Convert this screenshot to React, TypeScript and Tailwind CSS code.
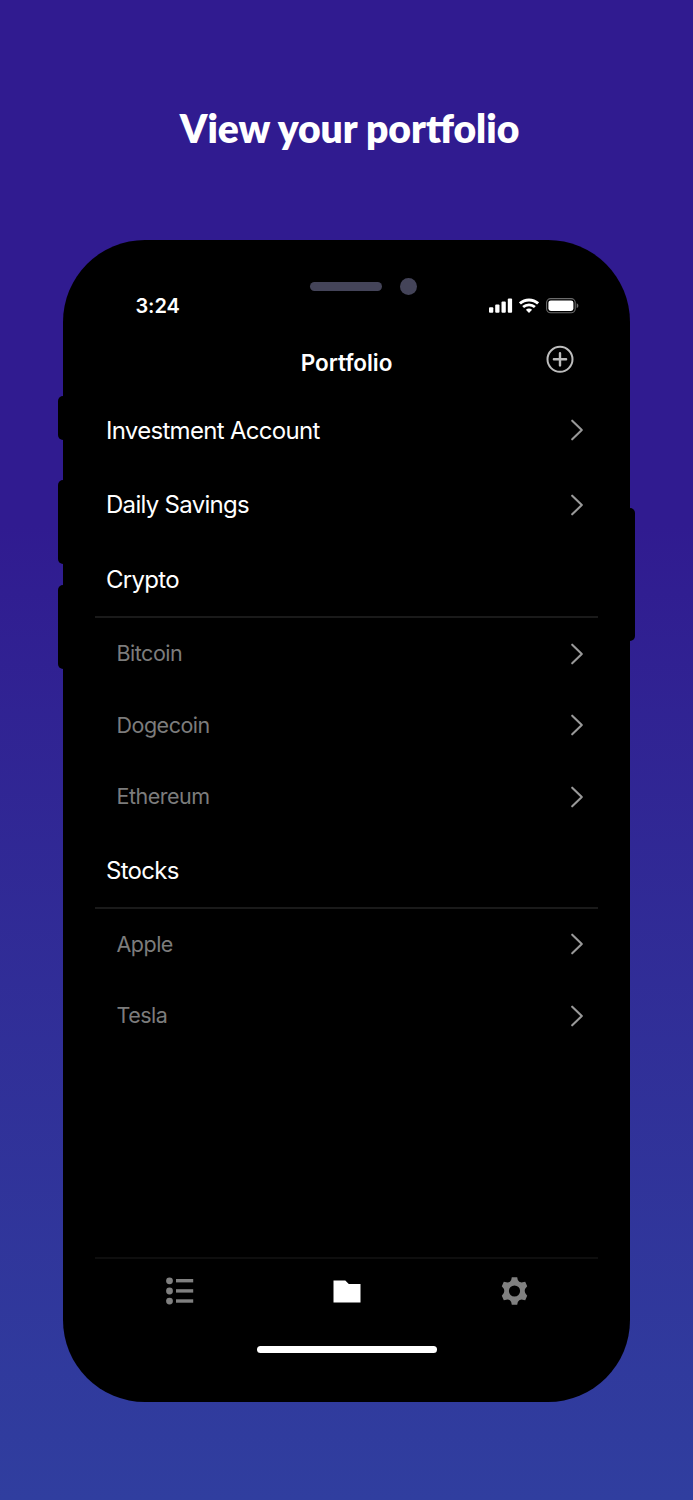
const accounts = ['Investment Account', 'Daily Savings']
const crypto = ['Bitcoin', 'Dogecoin', 'Ethereum']
const stocks = ['Apple', 'Tesla']

function Chevron() {
  return (
    <svg width="14" height="22" viewBox="0 0 14 22" fill="none" stroke="#999999" strokeWidth="2.1" strokeLinecap="round" strokeLinejoin="round">
      <path d="M2.2 1.7 11.8 11 2.2 20.3" />
    </svg>
  )
}

function StatusBar() {
  return (
    <div className="flex h-[30px] items-center justify-between pl-[40.5px] pr-[19px]">
      <span className="text-[20px] leading-[30px] font-semibold -tracking-[0.1px]">3:24</span>
      <div className="flex items-center">
        <svg width="24" height="16" viewBox="0 0 24 16" fill="#fff">
          <rect x="0" y="9.3" width="4.3" height="5.4" rx="1" />
          <rect x="6.2" y="6.6" width="4.3" height="8.1" rx="1" />
          <rect x="12.5" y="3.4" width="4.3" height="11.3" rx="1" />
          <rect x="18.8" y="0.4" width="4.3" height="14.3" rx="1" />
        </svg>
        <svg className="ml-[6px]" width="20" height="16" viewBox="0 0 20 16" fill="none" stroke="#fff" strokeWidth="3">
          <path d="M0.9 5.4C6 0.7 14 0.7 19.1 5.4" />
          <path d="M4.1 9.1C7.4 6 12.6 6 15.9 9.1" strokeWidth="2.7" />
          <path d="M6.9 11.8C8.7 10.2 11.3 10.2 13.1 11.8L10 14.9Z" fill="#fff" stroke="none" />
        </svg>
        <svg className="ml-[7px]" width="33" height="16" viewBox="0 0 33 16">
          <rect x="0.6" y="0.6" width="28.6" height="14.2" rx="4" fill="none" stroke="#6b6b6b" strokeWidth="1.1" />
          <rect x="2.4" y="2.4" width="25" height="10.6" rx="2.4" fill="#fff" />
          <path d="M30.7 5.3c2.2.8 2.2 4 0 4.8z" fill="#6b6b6b" />
        </svg>
      </div>
    </div>
  )
}

function SectionTitle({ name }: { name: string }) {
  return (
    <div className="flex h-[76px] items-center border-b-2 border-[#1a1a1a] pt-[2px] pl-[11px] text-[24px] tracking-[-0.7px]">
      {name}
    </div>
  )
}

function Asset({ name }: { name: string }) {
  return (
    <li className="flex h-[71.5px] items-center justify-between pr-[14px] pl-[21.5px] text-[21.5px] tracking-[-0.5px] text-[#7c7c7c]">
      <span className="pb-px">{name}</span>
      <Chevron />
    </li>
  )
}

function TabBar() {
  return (
    <nav className="grid h-[66px] grid-cols-3 justify-items-center border-t-2 border-[#0e0e0e] pt-[18px]">
      <svg className="ml-[3px]" width="28" height="28" viewBox="0 0 28 28" fill="#808080">
        <circle cx="3.5" cy="3.8" r="3.4" />
        <circle cx="3.5" cy="14" r="3.4" />
        <circle cx="3.5" cy="24.1" r="3.4" />
        <rect x="10" y="2" width="17.2" height="3.4" />
        <rect x="10" y="12.2" width="17.2" height="3.4" />
        <rect x="10" y="22.3" width="17.2" height="3.4" />
      </svg>
      <svg className="ml-px" width="28" height="28" viewBox="0 0 28 28" fill="#fff">
        <path d="M.5 3.5h11.8l3.5 3.4h11.7v18.7H.5z" />
      </svg>
      <svg width="28" height="28" viewBox="0 0 28 28" fill="#808080" fillRule="evenodd">
        <path d="M11.8.3h5.4l.6 2.7Q18.8 5.4 21.5 5.5l3.7-.7 2 4.4Q24.7 11.500 24.700 14q0 2.500 2.500 4.800l-2 4.400-3.700-.7Q18.800 22.600 17.800 25l-.6 2.700h-5.400l-.6-2.700Q10.200 22.600 7.500 22.500l-3.700.7-2-4.400Q4.300 16.500 4.300 14q0-2.500-2.500-4.800l2-4.400 3.700.7Q10.200 5.400 11.200 3zM14.500 8.400a5.600 5.600 0 1 0 0 11.200 5.600 5.600 0 1 0 0-11.200z" />
      </svg>
    </nav>
  )
}

export default function App() {
  return (
    <main className="flex h-[1500px] w-[693px] flex-col items-center bg-linear-to-b from-[#301b90] from-35% to-[#303e9f] font-['Inter',sans-serif] text-white">
      <h1 className="ml-[6px] h-[240px] pt-[102px] font-['Lato',sans-serif] text-[39px] leading-[52px] font-extrabold whitespace-nowrap">
        View your portfolio
      </h1>

      <div className="relative flex h-[1162px] w-[567px] shrink-0 flex-col rounded-[82px] bg-black px-8">
        {/* side buttons */}
        <span className="absolute top-[156.4px] -left-[5px] h-[44px] w-3 rounded-[5px] bg-black" />
        <span className="absolute top-[240.4px] -left-[5px] h-[84px] w-3 rounded-[5px] bg-black" />
        <span className="absolute top-[345.4px] -left-[5px] h-[84px] w-3 rounded-[5px] bg-black" />
        <span className="absolute top-[268.4px] -right-[5px] h-[133px] w-3 rounded-[5px] bg-black" />

        <div className="flex h-[51px] items-end pl-[215.4px]">
          <div className="flex h-[9px] items-center gap-[18px]">
            <span className="h-[9px] w-[72px] rounded-full bg-[#444459]" />
            <span className="size-[17px] shrink-0 rounded-full bg-[#444459]" />
          </div>
        </div>

        <StatusBar />

        <header className="grid h-[72px] grid-cols-3 pt-[24px]">
          <h2 className="col-start-2 text-center text-[22.5px] leading-[36px] font-semibold tracking-[-0.05px]">Portfolio</h2>
          <svg className="mr-[24px] justify-self-end" width="28" height="28" viewBox="0 0 28 28" fill="none" stroke="#bdbdbd">
            <circle cx="14" cy="14.3" r="12.5" strokeWidth="2" />
            <path d="M14 8.2v12.2M7.9 14.3h12.2" strokeWidth="2.4" strokeLinecap="round" />
          </svg>
        </header>

        <ul>
          {accounts.map((name) => (
            <li key={name} className="flex h-[74.6px] items-center justify-between pr-[14px] pl-[11px] text-[24px] tracking-[-0.7px]">
              <span className="pt-px">{name}</span>
              <Chevron />
            </li>
          ))}
        </ul>

        <SectionTitle name="Crypto" />
        <ul>
          {crypto.map((name) => (
            <Asset key={name} name={name} />
          ))}
        </ul>

        <SectionTitle name="Stocks" />
        <ul>
          {stocks.map((name) => (
            <Asset key={name} name={name} />
          ))}
        </ul>

        <div className="mt-auto mb-[49px]">
          <TabBar />
          <div className="mx-auto mt-[23px] h-[7px] w-[180px] rounded-full bg-white" />
        </div>
      </div>
    </main>
  )
}
